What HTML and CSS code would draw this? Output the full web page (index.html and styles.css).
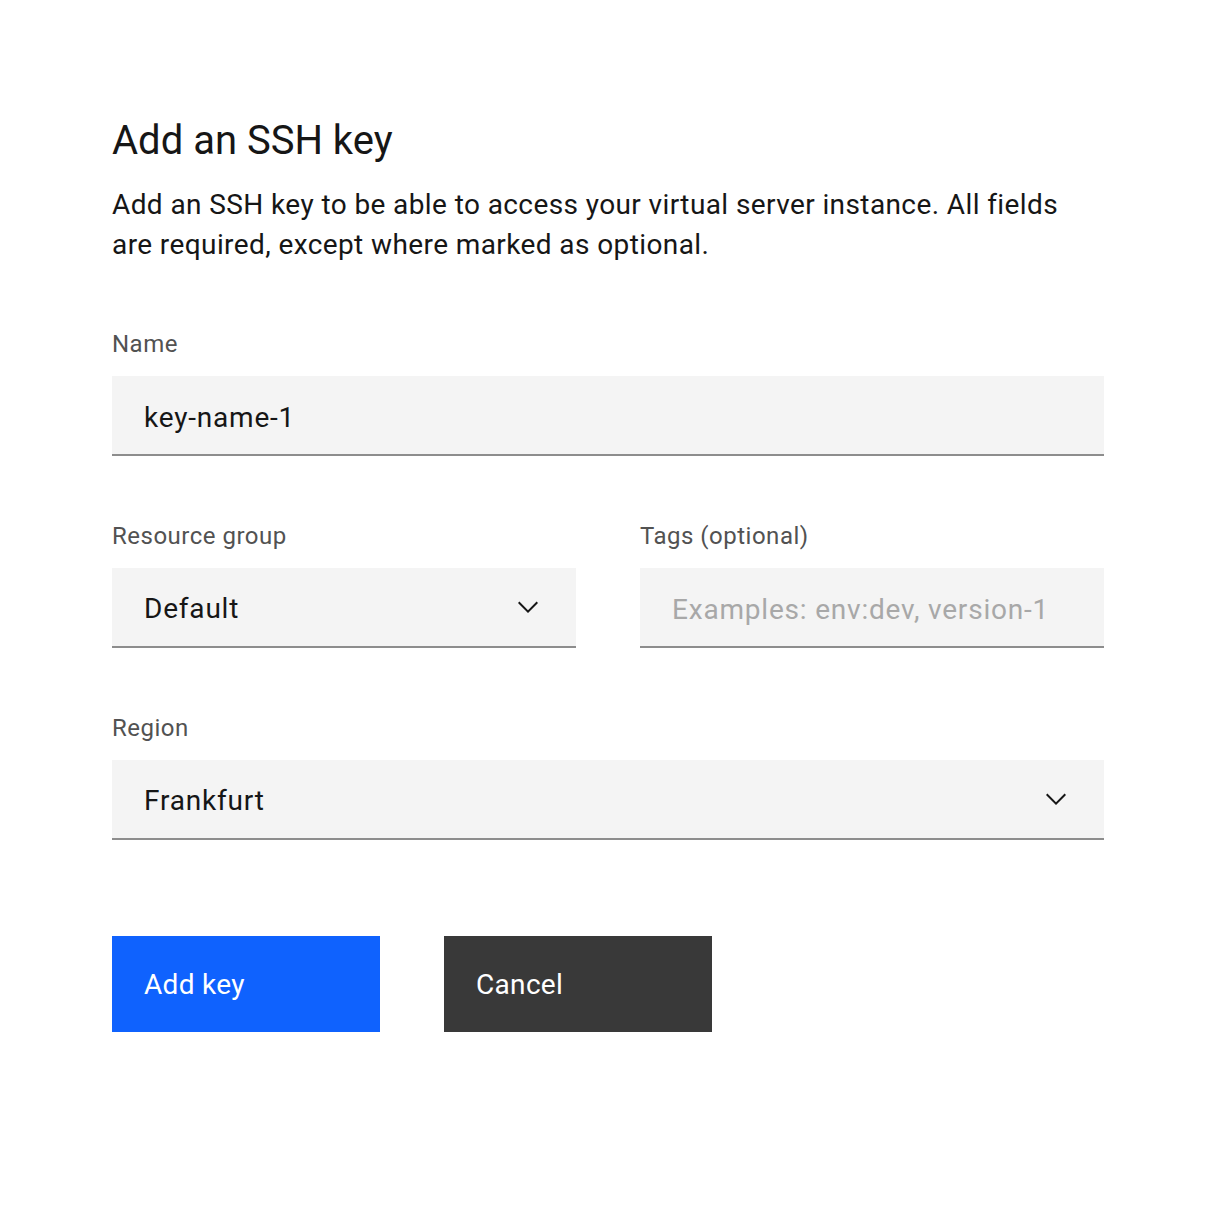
FILE: index.html
```html
<!DOCTYPE html>
<html lang="en">
<head>
<meta charset="utf-8">
<title>Add an SSH key</title>
<link rel="stylesheet" href="styles.css">
</head>
<body>
<main class="page">
  <h1 class="title">Add an SSH key</h1>
  <p class="desc">Add an SSH key to be able to access your virtual server instance. All fields are required, except where marked as optional.</p>

  <form class="form">
    <div class="field">
      <label class="label" for="name">Name</label>
      <input class="text-input" id="name" type="text" value="key-name-1">
    </div>

    <div class="row">
      <div class="field">
        <label class="label">Resource group</label>
        <div class="select">
          <span class="select-value">Default</span>
          <svg class="chevron" viewBox="0 0 16 16" width="32" height="32" aria-hidden="true"><path d="M8 11L3 6 3.7 5.3 8 9.6 12.3 5.3 13 6z"/></svg>
        </div>
      </div>
      <div class="field">
        <label class="label" for="tags">Tags (optional)</label>
        <input class="text-input" id="tags" type="text" placeholder="Examples: env:dev, version-1">
      </div>
    </div>

    <div class="field">
      <label class="label">Region</label>
      <div class="select">
        <span class="select-value">Frankfurt</span>
        <svg class="chevron" viewBox="0 0 16 16" width="32" height="32" aria-hidden="true"><path d="M8 11L3 6 3.7 5.3 8 9.6 12.3 5.3 13 6z"/></svg>
      </div>
    </div>

    <div class="actions">
      <button type="button" class="btn btn-primary">Add key</button>
      <button type="button" class="btn btn-secondary">Cancel</button>
    </div>
  </form>
</main>
</body>
</html>
```
FILE: styles.css
```css
* { box-sizing: border-box; }

html, body {
  margin: 0;
  padding: 0;
  background: #ffffff;
}

body {
  font-family: Roboto, "Liberation Sans", Arial, sans-serif;
  color: #161616;
}

.page {
  width: 1216px;
  padding: 113px 112px 0 112px;
}

.title {
  margin: 0;
  font-size: 40px;
  line-height: 56px;
  font-weight: 400;
  color: #161616;
}

.desc {
  margin: 16px 0 0 0;
  max-width: 960px;
  font-size: 28px;
  line-height: 40px;
  letter-spacing: 0.4px;
  font-weight: 400;
  color: #161616;
}

.form {
  margin-top: 63px;
  width: 992px;
  display: flex;
  flex-direction: column;
  gap: 64px;
}

.row {
  display: grid;
  grid-template-columns: 1fr 1fr;
  column-gap: 64px;
}

.field {
  display: flex;
  flex-direction: column;
}

.label {
  display: block;
  font-size: 24px;
  line-height: 32px;
  letter-spacing: 0.5px;
  color: #525252;
  margin-bottom: 16px;
}

.text-input,
.select {
  height: 80px;
  width: 100%;
  background: #f4f4f4;
  border: none;
  border-bottom: 2px solid #8d8d8d;
  border-radius: 0;
  padding: 4px 32px 0 32px;
  font-family: Roboto, "Liberation Sans", Arial, sans-serif;
  font-size: 28px;
  letter-spacing: 0.8px;
  color: #161616;
  outline: none;
  margin: 0;
}

.text-input::placeholder {
  color: #a8a8a8;
  opacity: 1;
}

.select {
  display: flex;
  align-items: center;
  justify-content: space-between;
}

.select-value {
  line-height: 40px;
}

.chevron {
  display: block;
  fill: #161616;
  flex: none;
  margin-top: -4px;
}

.actions {
  margin-top: 32px;
  display: flex;
  gap: 64px;
}

.btn {
  width: 268px;
  height: 96px;
  border: none;
  border-radius: 0;
  padding: 0 32px;
  text-align: left;
  font-family: Roboto, "Liberation Sans", Arial, sans-serif;
  font-size: 28px;
  letter-spacing: 0.32px;
  color: #ffffff;
  cursor: pointer;
}

.btn-primary { background: #0f62fe; }
.btn-secondary { background: #393939; }
```
